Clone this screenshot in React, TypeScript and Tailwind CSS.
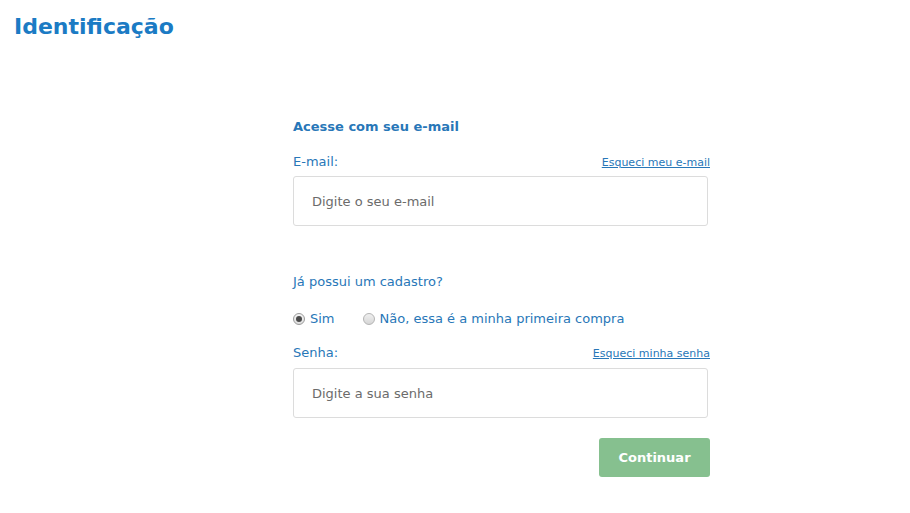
import React from 'react';

const App: React.FC = () => {
  return (
    <div className="min-h-[513px] w-[910px] bg-white font-['DejaVu_Sans',sans-serif]">
      <h1 className="pl-[14px] pt-[13px] text-[22px] font-bold leading-[28px] text-[#1b7bc4]">
        Identificação
      </h1>

      <div className="ml-[293px] mt-[78px] w-[417px]">
        <h2 className="text-[13px] font-bold leading-[16px] text-[#2877b8]">Acesse com seu e-mail</h2>

        <div className="mt-[19px] flex items-end justify-between">
          <label className="text-[13px] leading-[16px] text-[#2877b8]">E-mail:</label>
          <a href="#" className="text-[11px] leading-[14px] text-[#2877b8] underline">
            Esqueci meu e-mail
          </a>
        </div>
        <div className="mt-[6px] w-[415px]">
          <input
            type="text"
            placeholder="Digite o seu e-mail"
            className="h-[50px] w-full rounded-[3px] border border-[#dcdcdc] px-[18px] text-[13px] text-[#555] outline-none placeholder:text-[#6b6b6b]"
          />
        </div>

        <p className="mt-[48px] text-[13px] leading-[16px] text-[#2877b8]">Já possui um cadastro?</p>

        <div className="mt-[21px] flex items-center gap-[28px] text-[13px] leading-[16px] text-[#2877b8]">
          <label className="flex items-center gap-[5px]">
            <span className="flex h-[12px] w-[12px] items-center justify-center rounded-full border border-[#9a9a9a] bg-gradient-to-b from-[#f4f4f4] to-[#dedede]">
              <span className="h-[6px] w-[6px] rounded-full bg-[#4a4a4a]" />
            </span>
            Sim
          </label>
          <label className="flex items-center gap-[5px]">
            <span className="h-[12px] w-[12px] rounded-full border border-[#b4b4b4] bg-gradient-to-b from-[#f0f0f0] to-[#d6d6d6]" />
            Não, essa é a minha primeira compra
          </label>
        </div>

        <div className="mt-[18px] flex items-end justify-between">
          <label className="text-[13px] leading-[16px] text-[#2877b8]">Senha:</label>
          <a href="#" className="text-[11px] leading-[14px] text-[#2877b8] underline">
            Esqueci minha senha
          </a>
        </div>
        <div className="mt-[7px] w-[415px]">
          <input
            type="password"
            placeholder="Digite a sua senha"
            className="h-[50px] w-full rounded-[3px] border border-[#dcdcdc] px-[18px] text-[13px] text-[#555] outline-none placeholder:text-[#6b6b6b]"
          />
        </div>

        <div className="mt-[20px] flex justify-end">
          <button className="h-[39px] w-[111px] rounded-[3px] bg-[#86c08f] text-[13px] font-bold text-white">
            Continuar
          </button>
        </div>
      </div>
    </div>
  );
};

export default App;
